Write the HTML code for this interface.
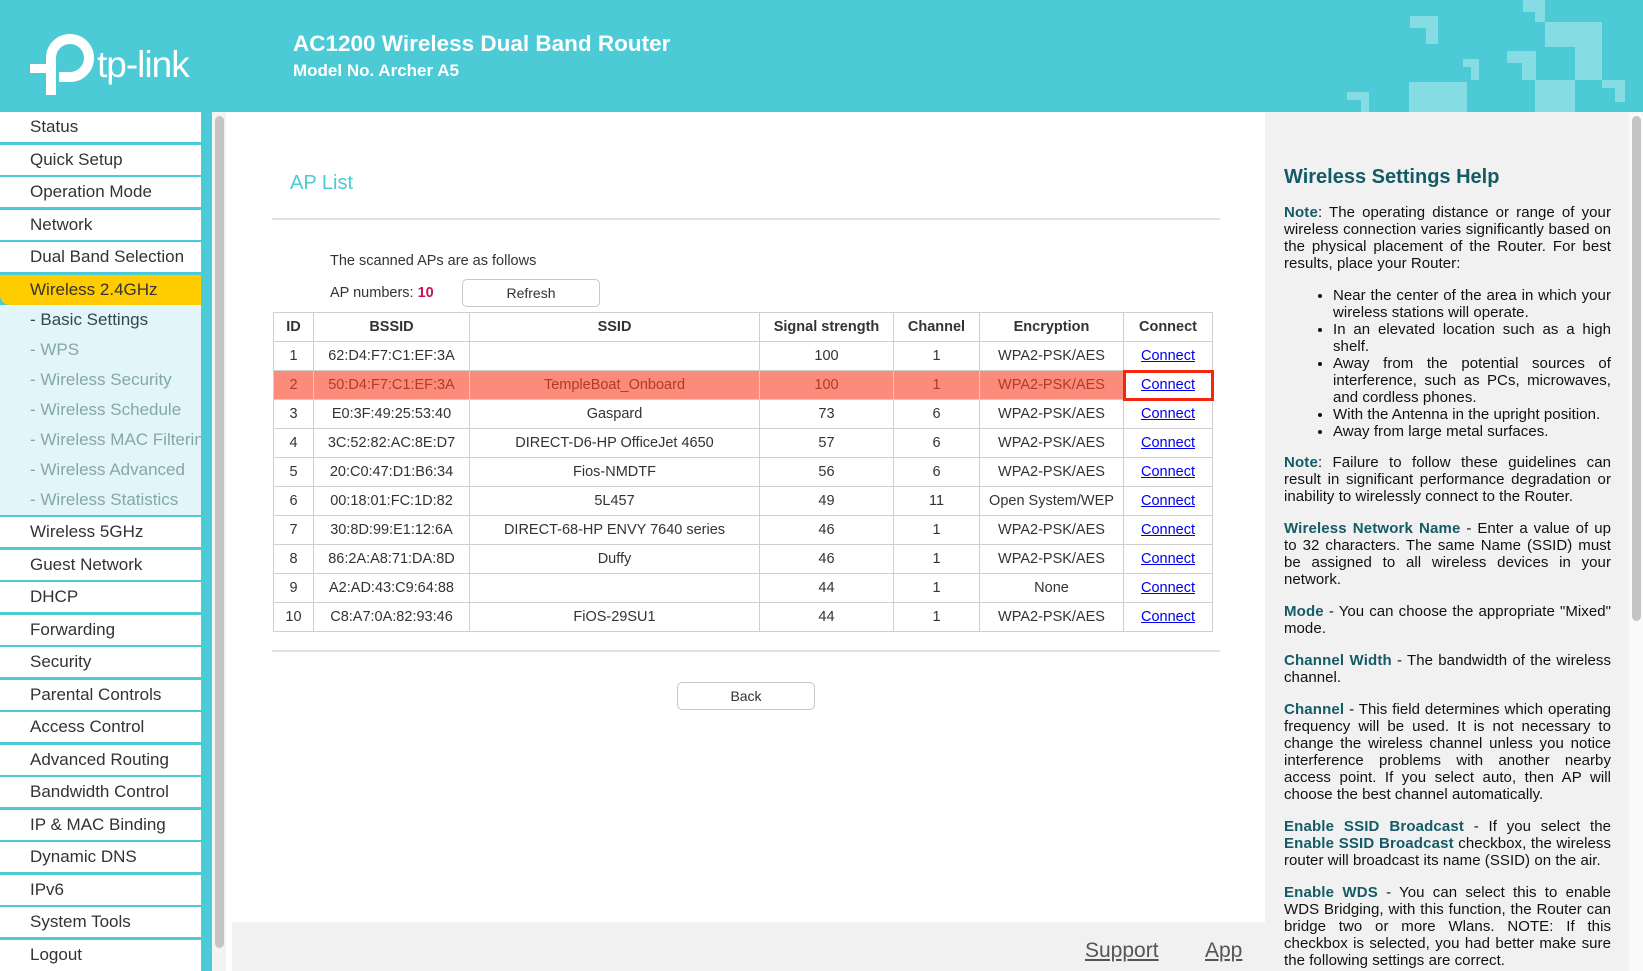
<!DOCTYPE html>
<html><head><meta charset="utf-8"><style>
*{margin:0;padding:0;box-sizing:border-box}
html,body{width:1643px;height:971px;overflow:hidden}
body{position:relative;font-family:"Liberation Sans",Arial,sans-serif;background:#fff}
.abs{position:absolute}
#hdr{left:0;top:0;width:1643px;height:112px;background:#4ccad6;overflow:hidden}
.sq{position:absolute;background:#86dce3}
#side{left:0;top:112px;width:212px;height:859px;background:#4ccad6}
.it{position:absolute;left:0;width:201px;background:#fff;color:#333;font-size:17px;padding-left:30px;line-height:30px;height:30px}
.sub{position:absolute;left:30px;color:#85a7ab;font-size:17px;line-height:30px}
table{position:absolute;left:273px;top:312px;border-collapse:collapse;font-size:14.5px;color:#333;table-layout:fixed;width:939px}
td,th{border:1px solid #cfcfcf;height:29px;text-align:center;padding:0;white-space:nowrap}
th{font-weight:bold}
td a{color:#0000ee;text-decoration:underline}
tr.hl td{background:#fb8c7b;color:#b5382b}
#rp{left:1265px;top:112px;width:378px;height:859px;background:#f1f1f1;overflow:hidden}
.help{position:absolute;left:19px;top:92px;width:327px;font-size:15px;line-height:17px;color:#111;text-align:justify;letter-spacing:0.05px}
.help p{margin-bottom:15px}
.help b{color:#145b66;letter-spacing:0.15px}
.help ul{margin:0 0 14px 49px}
.btn{position:absolute;border:1px solid #c8c8c8;border-radius:5px;background:#fff;text-align:center;font-size:14px;color:#333}
</style></head><body>
<div id="hdr" class="abs">
<svg class="abs" style="left:28px;top:33px" width="72" height="66" viewBox="0 0 72 66">
<path d="M23 62 V25 A19 19 0 1 1 42 44 H31" fill="none" stroke="#fff" stroke-width="10"/>
<rect x="2" y="31" width="22" height="9" fill="#fff"/>
</svg>
<div class="abs" style="left:97px;top:44px;color:#fff;font-size:37px;letter-spacing:-1px">tp-link</div>
<div class="abs" style="left:293px;top:31px;color:#fff;font-size:22.5px;font-weight:bold">AC1200 Wireless Dual Band Router</div>
<div class="abs" style="left:293px;top:61px;color:#fff;font-size:17px;font-weight:bold">Model No. Archer A5</div>
<div class="sq" style="left:1410px;top:16px;width:28px;height:12px"></div>
<div class="sq" style="left:1426px;top:16px;width:12px;height:28px"></div>
<div class="sq" style="left:1463px;top:59px;width:16px;height:8px"></div>
<div class="sq" style="left:1471px;top:59px;width:8px;height:21px"></div>
<div class="sq" style="left:1409px;top:82px;width:58px;height:30px"></div>
<div class="sq" style="left:1347px;top:92px;width:22px;height:8px"></div>
<div class="sq" style="left:1361px;top:92px;width:8px;height:20px"></div>
<div class="sq" style="left:1523px;top:0;width:22px;height:12px"></div>
<div class="sq" style="left:1535px;top:0;width:10px;height:22px"></div>
<div class="sq" style="left:1545px;top:22px;width:57px;height:25px"></div>
<div class="sq" style="left:1575px;top:22px;width:27px;height:58px"></div>
<div class="sq" style="left:1507px;top:51px;width:29px;height:12px"></div>
<div class="sq" style="left:1522px;top:51px;width:14px;height:29px"></div>
<div class="sq" style="left:1535px;top:80px;width:40px;height:32px"></div>
<div class="sq" style="left:1602px;top:80px;width:23px;height:8px"></div>
<div class="sq" style="left:1615px;top:80px;width:10px;height:22px"></div>
</div>
<div id="side" class="abs">
<div class="it" style="top:0px">Status</div>
<div class="it" style="top:33px">Quick Setup</div>
<div class="it" style="top:65px">Operation Mode</div>
<div class="it" style="top:98px">Network</div>
<div class="it" style="top:130px">Dual Band Selection</div>
<div class="it" style="top:163px;background:#ffcc00;border-bottom-left-radius:10px">Wireless 2.4GHz</div>
<div class="abs" style="left:0;top:193px;width:201px;height:210px;background:#e2f5f8"></div>
<div class="sub" style="top:193px;color:#2e4a4f">- Basic Settings</div>
<div class="sub" style="top:223px">- WPS</div>
<div class="sub" style="top:253px">- Wireless Security</div>
<div class="sub" style="top:283px">- Wireless Schedule</div>
<div class="sub" style="top:313px;width:171px;overflow:hidden;white-space:nowrap">- Wireless MAC Filtering</div>
<div class="sub" style="top:343px">- Wireless Advanced</div>
<div class="sub" style="top:373px">- Wireless Statistics</div>
<div class="it" style="top:405px">Wireless 5GHz</div>
<div class="it" style="top:438px">Guest Network</div>
<div class="it" style="top:470px">DHCP</div>
<div class="it" style="top:503px">Forwarding</div>
<div class="it" style="top:535px">Security</div>
<div class="it" style="top:568px">Parental Controls</div>
<div class="it" style="top:600px">Access Control</div>
<div class="it" style="top:633px">Advanced Routing</div>
<div class="it" style="top:665px">Bandwidth Control</div>
<div class="it" style="top:698px">IP &amp; MAC Binding</div>
<div class="it" style="top:730px">Dynamic DNS</div>
<div class="it" style="top:763px">IPv6</div>
<div class="it" style="top:795px">System Tools</div>
<div class="it" style="top:828px;height:31px">Logout</div>
</div>
<div class="abs" style="left:212px;top:112px;width:14px;height:859px;background:#f4f4f4"></div>
<div class="abs" style="left:215px;top:116px;width:9px;height:832px;background:#c4c4c4;border-radius:5px"></div>
<div class="abs" style="left:290px;top:172px;color:#4ccad6;font-size:20px">AP List</div>
<div class="abs" style="left:272px;top:218px;width:948px;height:2px;background:#e0e0e0"></div>
<div class="abs" style="left:330px;top:253px;font-size:14.5px;color:#333">The scanned APs are as follows</div>
<div class="abs" style="left:330px;top:285px;font-size:14.5px;color:#333">AP numbers: <b style="color:#c2185b">10</b></div>
<div class="btn" style="left:462px;top:279px;width:138px;height:28px;line-height:26px">Refresh</div>
<table>
<colgroup><col style="width:40px"><col style="width:156px"><col style="width:290px"><col style="width:134px"><col style="width:86px"><col style="width:144px"><col style="width:89px"></colgroup>
<tr><th>ID</th><th>BSSID</th><th>SSID</th><th>Signal strength</th><th>Channel</th><th>Encryption</th><th>Connect</th></tr>
<tr><td>1</td><td>62:D4:F7:C1:EF:3A</td><td></td><td>100</td><td>1</td><td>WPA2-PSK/AES</td><td><a>Connect</a></td></tr>
<tr class="hl"><td>2</td><td>50:D4:F7:C1:EF:3A</td><td>TempleBoat_Onboard</td><td>100</td><td>1</td><td>WPA2-PSK/AES</td><td style="background:#fff;outline:3px solid #f5260d;outline-offset:-2px"><a>Connect</a></td></tr>
<tr><td>3</td><td>E0:3F:49:25:53:40</td><td>Gaspard</td><td>73</td><td>6</td><td>WPA2-PSK/AES</td><td><a>Connect</a></td></tr>
<tr><td>4</td><td>3C:52:82:AC:8E:D7</td><td>DIRECT-D6-HP OfficeJet 4650</td><td>57</td><td>6</td><td>WPA2-PSK/AES</td><td><a>Connect</a></td></tr>
<tr><td>5</td><td>20:C0:47:D1:B6:34</td><td>Fios-NMDTF</td><td>56</td><td>6</td><td>WPA2-PSK/AES</td><td><a>Connect</a></td></tr>
<tr><td>6</td><td>00:18:01:FC:1D:82</td><td>5L457</td><td>49</td><td>11</td><td>Open System/WEP</td><td><a>Connect</a></td></tr>
<tr><td>7</td><td>30:8D:99:E1:12:6A</td><td>DIRECT-68-HP ENVY 7640 series</td><td>46</td><td>1</td><td>WPA2-PSK/AES</td><td><a>Connect</a></td></tr>
<tr><td>8</td><td>86:2A:A8:71:DA:8D</td><td>Duffy</td><td>46</td><td>1</td><td>WPA2-PSK/AES</td><td><a>Connect</a></td></tr>
<tr><td>9</td><td>A2:AD:43:C9:64:88</td><td></td><td>44</td><td>1</td><td>None</td><td><a>Connect</a></td></tr>
<tr><td>10</td><td>C8:A7:0A:82:93:46</td><td>FiOS-29SU1</td><td>44</td><td>1</td><td>WPA2-PSK/AES</td><td><a>Connect</a></td></tr>
</table>
<div class="abs" style="left:272px;top:650px;width:948px;height:2px;background:#e0e0e0"></div>
<div class="btn" style="left:677px;top:682px;width:138px;height:28px;line-height:26px">Back</div>
<div class="abs" style="left:232px;top:922px;width:1033px;height:49px;background:#f1f1f1"></div>
<div class="abs" style="left:1085px;top:939px;font-size:21px;color:#555;text-decoration:underline">Support</div>
<div class="abs" style="left:1205px;top:939px;font-size:21px;color:#555;text-decoration:underline">App</div>
<div id="rp" class="abs">
<div class="abs" style="left:364px;top:0;width:14px;height:859px;background:#fafafa"></div>
<div class="abs" style="left:367px;top:4px;width:9px;height:505px;background:#c4c4c4;border-radius:5px"></div>
<div class="abs" style="left:19px;top:54px;font-size:20px;font-weight:bold;color:#145b66">Wireless Settings Help</div>
<div class="help">
<p><b>Note</b>: The operating distance or range of your wireless connection varies significantly based on the physical placement of the Router. For best results, place your Router:</p>
<ul>
<li>Near the center of the area in which your wireless stations will operate.</li>
<li>In an elevated location such as a high shelf.</li>
<li>Away from the potential sources of interference, such as PCs, microwaves, and cordless phones.</li>
<li>With the Antenna in the upright position.</li>
<li>Away from large metal surfaces.</li>
</ul>
<p><b>Note</b>: Failure to follow these guidelines can result in significant performance degradation or inability to wirelessly connect to the Router.</p>
<p><b>Wireless Network Name</b> - Enter a value of up to 32 characters. The same Name (SSID) must be assigned to all wireless devices in your network.</p>
<p><b>Mode</b> - You can choose the appropriate "Mixed" mode.</p>
<p><b>Channel Width</b> - The bandwidth of the wireless channel.</p>
<p><b>Channel</b> - This field determines which operating frequency will be used. It is not necessary to change the wireless channel unless you notice interference problems with another nearby access point. If you select auto, then AP will choose the best channel automatically.</p>
<p><b>Enable SSID Broadcast</b> - If you select the <b>Enable SSID Broadcast</b> checkbox, the wireless router will broadcast its name (SSID) on the air.</p>
<p><b>Enable WDS</b> - You can select this to enable WDS Bridging, with this function, the Router can bridge two or more Wlans. NOTE: If this checkbox is selected, you had better make sure the following settings are correct.</p>
</div>
</div>
</body></html>
